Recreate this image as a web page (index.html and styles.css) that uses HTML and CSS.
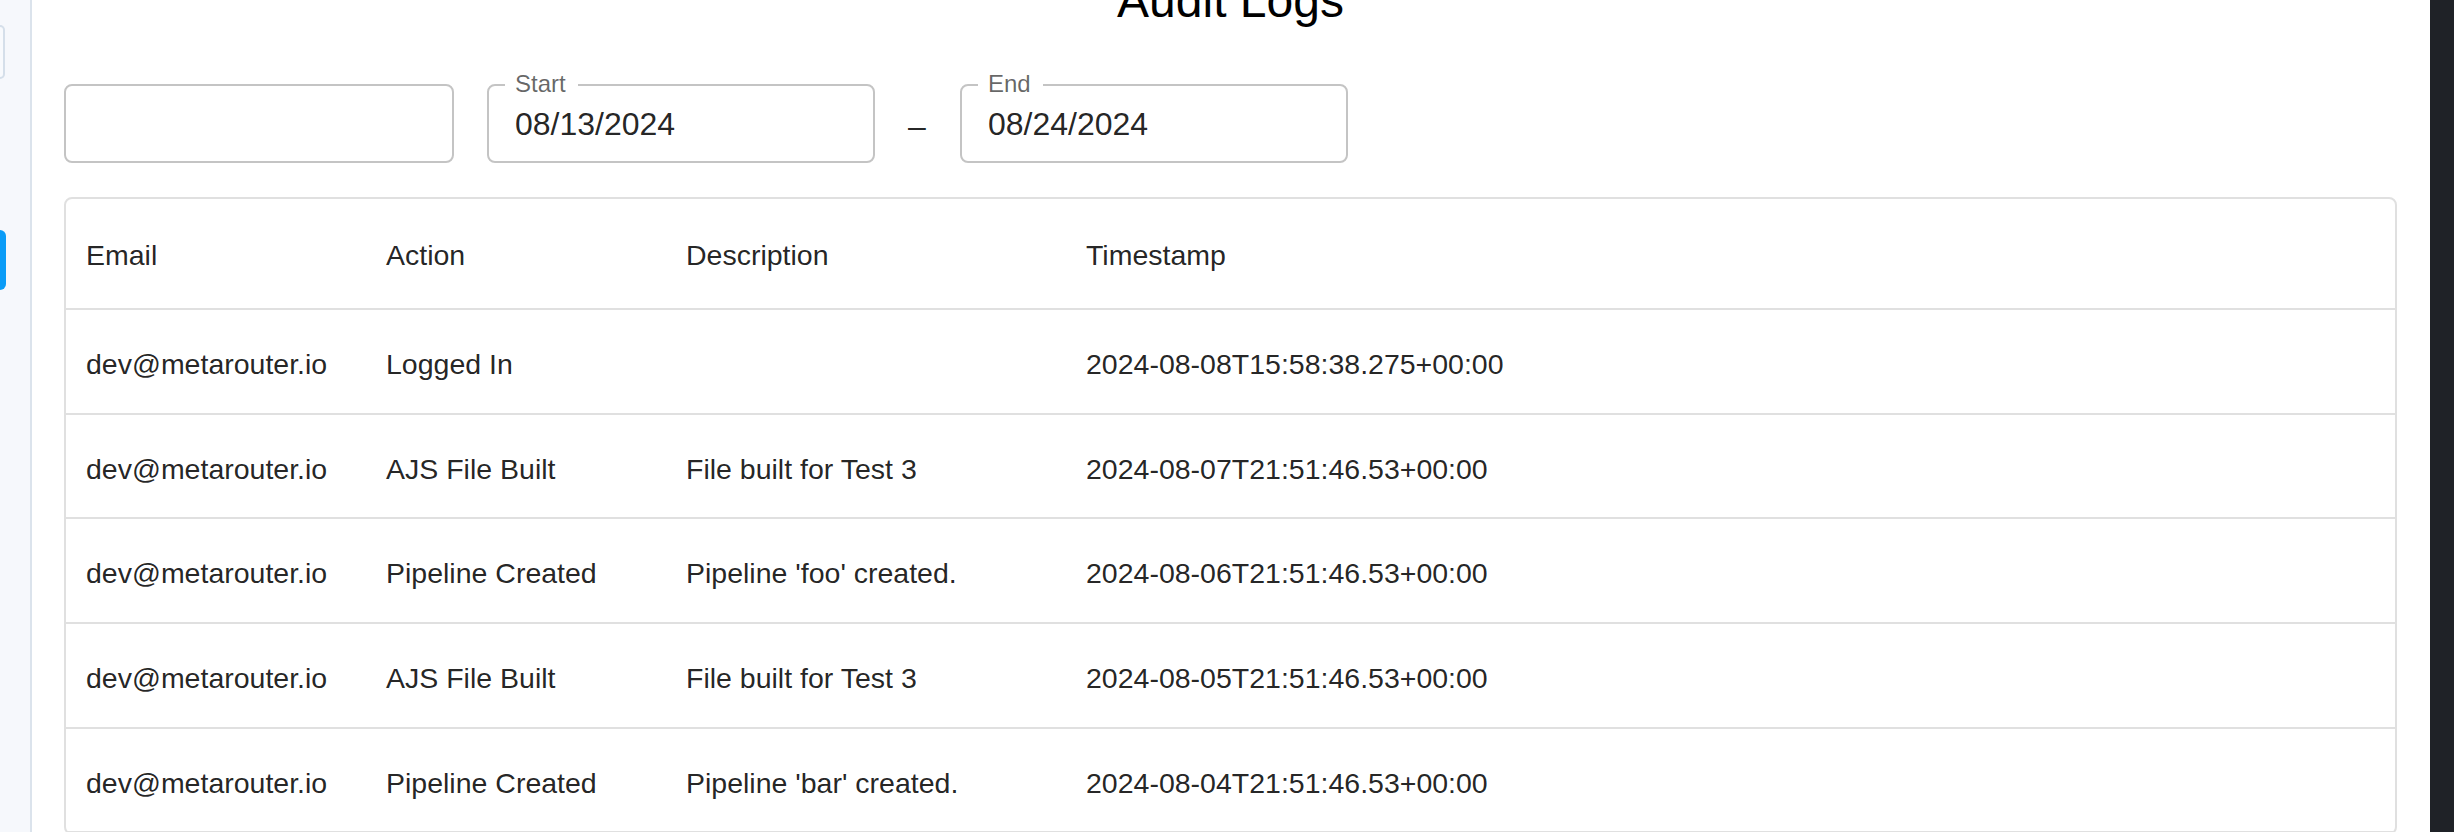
FILE: index.html
```html
<!DOCTYPE html>
<html lang="en">
<head>
<meta charset="utf-8">
<title>Audit Logs</title>
<link rel="stylesheet" href="styles.css">
</head>
<body>
<div class="app">
  <aside class="sidebar">
    <div class="side-card"></div>
    <div class="side-active"></div>
  </aside>
  <main class="main">
    <h1 class="title">Audit Logs</h1>
    <div class="filters">
      <div class="field field-search"></div>
      <div class="field">
        <span class="field-label">Start</span>
        <span class="field-value">08/13/2024</span>
      </div>
      <span class="range-sep">–</span>
      <div class="field">
        <span class="field-label">End</span>
        <span class="field-value">08/24/2024</span>
      </div>
    </div>
    <div class="table">
      <div class="row head">
        <div class="cell">Email</div>
        <div class="cell">Action</div>
        <div class="cell">Description</div>
        <div class="cell">Timestamp</div>
      </div>
      <div class="row">
        <div class="cell">dev@metarouter.io</div>
        <div class="cell">Logged In</div>
        <div class="cell"></div>
        <div class="cell">2024-08-08T15:58:38.275+00:00</div>
      </div>
      <div class="row">
        <div class="cell">dev@metarouter.io</div>
        <div class="cell">AJS File Built</div>
        <div class="cell">File built for Test 3</div>
        <div class="cell">2024-08-07T21:51:46.53+00:00</div>
      </div>
      <div class="row">
        <div class="cell">dev@metarouter.io</div>
        <div class="cell">Pipeline Created</div>
        <div class="cell">Pipeline 'foo' created.</div>
        <div class="cell">2024-08-06T21:51:46.53+00:00</div>
      </div>
      <div class="row">
        <div class="cell">dev@metarouter.io</div>
        <div class="cell">AJS File Built</div>
        <div class="cell">File built for Test 3</div>
        <div class="cell">2024-08-05T21:51:46.53+00:00</div>
      </div>
      <div class="row">
        <div class="cell">dev@metarouter.io</div>
        <div class="cell">Pipeline Created</div>
        <div class="cell">Pipeline 'bar' created.</div>
        <div class="cell">2024-08-04T21:51:46.53+00:00</div>
      </div>
    </div>
  </main>
  <div class="scrollbar"></div>
</div>
</body>
</html>
```

FILE: styles.css
```css
html, body {
  margin: 0;
  padding: 0;
  height: 832px;
  overflow: hidden;
  background: #ffffff;
  font-family: "Liberation Sans", Arial, Helvetica, sans-serif;
  color: rgba(0, 0, 0, 0.87);
}

.app {
  display: flex;
  height: 832px;
  overflow: hidden;
}

.sidebar {
  width: 30px;
  flex: 0 0 30px;
  background: #f6f8fc;
  border-right: 2px solid #dbe3ec;
  display: flex;
  flex-direction: column;
}

.side-card {
  margin-top: 25px;
  width: 3px;
  height: 50px;
  border: 2px solid #d5dfea;
  border-left: none;
  border-radius: 0 8px 8px 0;
  background: #f8fafd;
}

.side-active {
  margin-top: 151px;
  width: 6px;
  height: 60px;
  background: #0b9cf7;
  border-radius: 0 8px 8px 0;
}

.main {
  flex: 1 1 auto;
  min-width: 0;
  padding: 0 33px 0 32px;
  display: flex;
  flex-direction: column;
}

.title {
  margin: -27px 0 0 0;
  font-size: 48px;
  line-height: 56px;
  font-weight: 400;
  text-align: center;
  color: #000000;
}

.filters {
  margin-top: 55px;
  display: flex;
  align-items: center;
  gap: 33px;
}

.field {
  position: relative;
  box-sizing: border-box;
  width: 388px;
  height: 79px;
  border: 2px solid #c4c4c4;
  border-radius: 8px;
  display: flex;
  align-items: center;
  padding-left: 26px;
}

.field-search {
  width: 390px;
}

.field-label {
  position: absolute;
  top: -14px;
  left: 16px;
  padding: 0 12px 0 10px;
  background: #ffffff;
  font-size: 24px;
  line-height: 24px;
  color: rgba(0, 0, 0, 0.6);
}

.field-value {
  font-size: 32px;
  line-height: 32px;
  color: rgba(0, 0, 0, 0.87);
}

.range-sep {
  width: 19px;
  font-size: 32px;
  line-height: 32px;
  color: rgba(0, 0, 0, 0.87);
  margin-top: 4px;
}

.table {
  margin-top: 34px;
  border: 2px solid #e0e0e0;
  border-radius: 8px;
}

.row {
  display: grid;
  grid-template-columns: 300px 300px 400px 1fr;
  height: 102.7px;
  border-bottom: 2px solid #e0e0e0;
}

.row.head {
  height: 109px;
}

.cell {
  display: flex;
  align-items: center;
  padding-left: 20px;
  padding-top: 5px;
  font-size: 28.5px;
  line-height: 28px;
  white-space: nowrap;
  color: rgba(0, 0, 0, 0.87);
}

.row.head .cell {
  padding-top: 2px;
}

.scrollbar {
  width: 24px;
  flex: 0 0 24px;
  background: #1f2227;
}
```
